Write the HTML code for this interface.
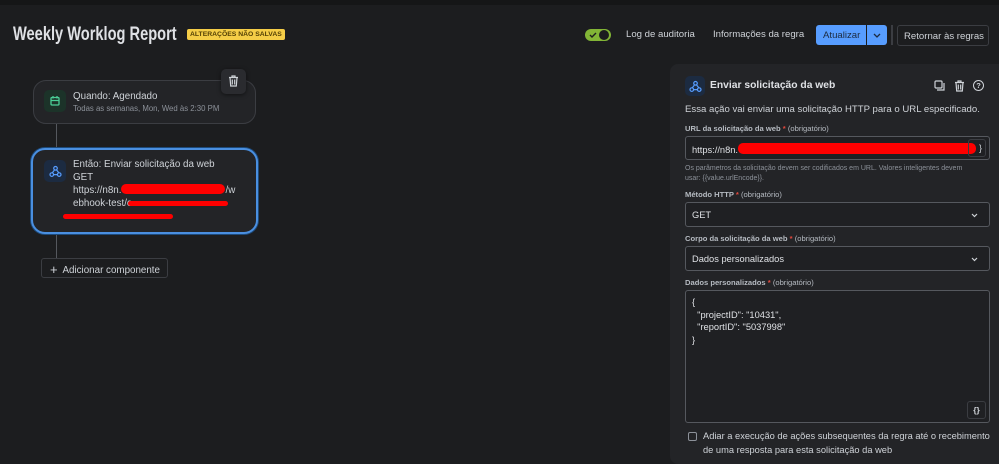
<!DOCTYPE html><html><head><meta charset="utf-8"><style>
*{box-sizing:border-box;margin:0;padding:0}
body{width:999px;height:461px;overflow:hidden;background:#1c1d1f;font-family:"Liberation Sans",sans-serif;color:#cfd3d8;position:relative}
.a{position:absolute;white-space:nowrap}
.top{left:0;top:0;width:999px;height:5px;background:#151617}
.title{left:13px;top:24px;font-size:19px;font-weight:bold;color:#dfe1e5;transform:scaleX(0.77);transform-origin:left}
.badge{left:187px;top:29px;background:#f5cd47;color:#533f04;font-size:6.8px;font-weight:bold;padding:2px 3px;border-radius:2px}
.card{background:#232427;border:1px solid #3b3d42;border-radius:13px}
.ic{width:22px;height:22px;border-radius:5px;display:flex;align-items:center;justify-content:center}
.sm{font-size:9.8px;color:#cfd3d8}
.panel{left:670px;top:64px;width:340px;height:400px;background:#232427;border-radius:8px}
.lbl{font-size:7.6px;font-weight:bold;color:#b6bbc2}
.lbl span{color:#e2483d}.lbl i{font-style:normal;font-weight:normal}
.inp{border:1px solid #55585e;border-radius:3px;background:#1f2023;font-size:9.3px;color:#dfe1e5;padding-left:6px}
.btn{font-size:9.6px;color:#cfd3d8}
</style></head><body>
<div class="a top"></div>
<div class="a title">Weekly Worklog Report</div>
<div class="a badge">ALTERAÇÕES NÃO SALVAS</div>

<div class="a" style="left:585px;top:29px;width:26px;height:12px;border-radius:6px;background:#82b536"></div>
<div class="a" style="left:599px;top:30px;width:10px;height:10px;border-radius:5px;background:#1c1d1f"></div>
<svg class="a" style="left:589px;top:31px" width="8" height="8" viewBox="0 0 8 8"><path d="M1 4l2 2 4-4" stroke="#1c1d1f" stroke-width="1.4" fill="none"/></svg>
<div class="a btn" style="left:626px;top:29px">Log de auditoria</div>
<div class="a btn" style="left:713px;top:29px">Informações da regra</div>
<div class="a" style="left:816px;top:25px;width:50px;height:20px;background:#579dff;border-radius:3px 0 0 3px;color:#1c2b41;font-size:9.6px;padding:5px 0 0 7px">Atualizar</div>
<div class="a" style="left:867px;top:25px;width:20px;height:20px;background:#579dff;border-radius:0 3px 3px 0"><svg style="position:absolute;left:6px;top:8px" width="8" height="5" viewBox="0 0 8 5"><path d="M1 1l3 3 3-3" stroke="#1c2b41" stroke-width="1.3" fill="none"/></svg></div>
<div class="a" style="left:891px;top:25px;width:2px;height:20px;background:#3b3d42"></div>
<div class="a" style="left:897px;top:25px;width:92px;height:21px;border:1px solid #3b3d42;border-radius:3px;font-size:9.6px;padding:5px 0 0 6px;color:#cfd3d8">Retornar às regras</div>

<div class="a" style="left:56px;top:122px;width:1px;height:30px;background:#55585e"></div>
<div class="a" style="left:56px;top:232px;width:1px;height:26px;background:#55585e"></div>
<div class="a card" style="left:33px;top:80px;width:223px;height:44px"></div>
<div class="a ic" style="left:44px;top:90px;background:#1c3329"><svg width="12" height="12" viewBox="0 0 12 12"><rect x="2" y="2.5" width="8" height="7.5" rx="1" stroke="#4bce97" stroke-width="1.3" fill="none"/><path d="M2 5.5h8M4 1v2.5M8 1v2.5" stroke="#4bce97" stroke-width="1.3"/></svg></div>
<div class="a sm" style="left:73px;top:91px">Quando: Agendado</div>
<div class="a" style="left:73px;top:104px;font-size:7.8px;color:#8c9199">Todas as semanas, Mon, Wed às 2:30 PM</div>
<div class="a" style="left:221px;top:69px;width:25px;height:25px;background:#2a2b2f;border-radius:5px;box-shadow:0 1px 4px #0008"><svg style="position:absolute;left:7px;top:6px" width="11" height="12" viewBox="0 0 11 12"><path d="M1 2.5h9M4 2.5V1h3v1.5M2 2.5l.7 8.5h5.6l.7-8.5M4.3 4.5v5M6.7 4.5v5" stroke="#cfd3d8" stroke-width="1.2" fill="none"/></svg></div>

<div class="a" style="left:31px;top:148px;width:227px;height:86px;border:2px solid #4a8fe0;border-radius:14px;background:#232427;box-shadow:0 0 0 1px #1d4a7a"></div>
<div class="a ic" style="left:44px;top:160px;background:#1c2b41"><svg width="13" height="13" viewBox="0 0 13 13"><circle cx="6.5" cy="3.3" r="1.8" stroke="#579dff" stroke-width="1.2" fill="none"/><circle cx="2.8" cy="9.6" r="1.8" stroke="#579dff" stroke-width="1.2" fill="none"/><circle cx="10.2" cy="9.6" r="1.8" stroke="#579dff" stroke-width="1.2" fill="none"/><path d="M5.6 4.8L3.2 8M4.6 9.6h3.8M7.4 4.8l2.4 3" stroke="#579dff" stroke-width="1.2"/></svg></div>
<div class="a sm" style="left:73px;top:159px;line-height:12.5px">Então: Enviar solicitação da web<br>GET<br>https://n8n.<span style="display:inline-block;width:104px;height:10px;background:#ff0000;border-radius:5px;vertical-align:-1px"></span>/w<br>ebhook-test/c</div>
<div class="a" style="left:128px;top:201px;width:100px;height:5px;background:#ff0000;border-radius:3px"></div>
<div class="a" style="left:63px;top:214px;width:110px;height:5px;background:#ff0000;border-radius:3px"></div>

<div class="a" style="left:41px;top:258px;width:127px;height:20px;border:1px solid #3b3d42;border-radius:3px;font-size:9.8px;padding:3px 0 0 8px;color:#cfd3d8"><span style="font-size:13px;vertical-align:-1px">+</span>&nbsp; Adicionar componente</div>

<div class="a panel"></div>
<div class="a ic" style="left:685px;top:76px;width:20px;height:20px;background:#1c2b41"><svg width="13" height="13" viewBox="0 0 13 13"><circle cx="6.5" cy="3.3" r="1.8" stroke="#579dff" stroke-width="1.2" fill="none"/><circle cx="2.8" cy="9.6" r="1.8" stroke="#579dff" stroke-width="1.2" fill="none"/><circle cx="10.2" cy="9.6" r="1.8" stroke="#579dff" stroke-width="1.2" fill="none"/><path d="M5.6 4.8L3.2 8M4.6 9.6h3.8M7.4 4.8l2.4 3" stroke="#579dff" stroke-width="1.2"/></svg></div>
<div class="a" style="left:710px;top:80px;font-size:10.3px;font-weight:bold;color:#dfe1e5">Enviar solicitação da web</div>
<svg class="a" style="left:934px;top:80px" width="11" height="11" viewBox="0 0 11 11"><rect x="1" y="1" width="7" height="7" rx="1" stroke="#cfd3d8" stroke-width="1.2" fill="none"/><path d="M3 10h7V3" stroke="#cfd3d8" stroke-width="1.2" fill="none"/></svg>
<svg class="a" style="left:954px;top:80px" width="11" height="12" viewBox="0 0 11 12"><path d="M1 2.5h9M4 2.5V1h3v1.5M2 2.5l.7 8.5h5.6l.7-8.5M4.3 4.5v5M6.7 4.5v5" stroke="#cfd3d8" stroke-width="1.2" fill="none"/></svg>
<div class="a" style="left:973px;top:80px;width:11px;height:11px;border:1.3px solid #cfd3d8;border-radius:50%;font-size:7.5px;text-align:center;line-height:9px;font-weight:bold">?</div>
<div class="a" style="left:685px;top:104px;font-size:9.6px;color:#cfd3d8">Essa ação vai enviar uma solicitação HTTP para o URL especificado.</div>
<div class="a lbl" style="left:685px;top:124px">URL da solicitação da web <span>*</span> <i>(obrigatório)</i></div>
<div class="a inp" style="left:685px;top:136px;width:305px;height:24px;padding-top:6px">https://n8n.<span style="display:inline-block;width:238px;height:11px;background:#ff0000;border-radius:5px;vertical-align:-1px"></span></div>
<div class="a" style="left:968px;top:139px;width:18px;height:18px;border:1px solid #3b3d42;border-radius:3px;font-size:9px;text-align:right;padding-right:3px;line-height:16px">}</div>
<div class="a" style="left:685px;top:164px;font-size:7px;color:#8c9199;line-height:10px">Os parâmetros da solicitação devem ser codificados em URL. Valores inteligentes devem<br>usar: {{value.urlEncode}}.</div>
<div class="a lbl" style="left:685px;top:190px">Método HTTP <span>*</span> <i>(obrigatório)</i></div>
<div class="a inp" style="left:685px;top:202px;width:305px;height:25px;padding-top:7px">GET<svg style="position:absolute;right:11px;top:10px" width="7" height="5" viewBox="0 0 7 5"><path d="M1 1l2.5 2.5L6 1" stroke="#cfd3d8" stroke-width="1.2" fill="none"/></svg></div>
<div class="a lbl" style="left:685px;top:234px">Corpo da solicitação da web <span>*</span> <i>(obrigatório)</i></div>
<div class="a inp" style="left:685px;top:246px;width:305px;height:25px;padding-top:7px">Dados personalizados<svg style="position:absolute;right:11px;top:10px" width="7" height="5" viewBox="0 0 7 5"><path d="M1 1l2.5 2.5L6 1" stroke="#cfd3d8" stroke-width="1.2" fill="none"/></svg></div>
<div class="a lbl" style="left:685px;top:278px">Dados personalizados <span>*</span> <i>(obrigatório)</i></div>
<div class="a inp" style="left:685px;top:290px;width:305px;height:133px;padding-top:5px;line-height:12.5px;white-space:pre">{
  "projectID": "10431",
  "reportID": "5037998"
}</div>
<div class="a" style="left:967px;top:401px;width:19px;height:18px;border:1px solid #3b3d42;border-radius:3px;font-size:8.5px;text-align:center;line-height:16px;font-weight:bold">{}</div>
<div class="a" style="left:688px;top:432px;width:9px;height:9px;border:1px solid #8c9199;border-radius:2px"></div>
<div class="a" style="left:703px;top:430px;font-size:9.3px;line-height:13.5px;color:#cfd3d8">Adiar a execução de ações subsequentes da regra até o recebimento<br>de uma resposta para esta solicitação da web</div>
</body></html>
